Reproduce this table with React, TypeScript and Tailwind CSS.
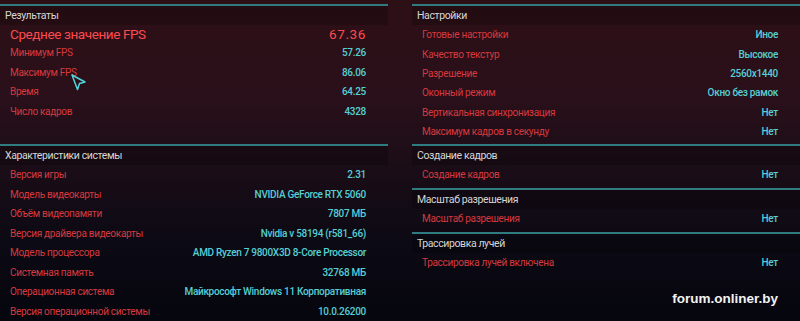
import React from "react";

type Row = [string, string];

const results: Row[] = [
  ["Минимум FPS", "57.26"],
  ["Максимум FPS", "86.06"],
  ["Время", "64.25"],
  ["Число кадров", "4328"],
];

const system: Row[] = [
  ["Версия игры", "2.31"],
  ["Модель видеокарты", "NVIDIA GeForce RTX 5060"],
  ["Объём видеопамяти", "7807 МБ"],
  ["Версия драйвера видеокарты", "Nvidia v 58194 (r581_66)"],
  ["Модель процессора", "AMD Ryzen 7 9800X3D 8-Core Processor"],
  ["Системная память", "32768 МБ"],
  ["Операционная система", "Майкрософт Windows 11 Корпоративная"],
  ["Версия операционной системы", "10.0.26200"],
];

const settings: Row[] = [
  ["Готовые настройки", "Иное"],
  ["Качество текстур", "Высокое"],
  ["Разрешение", "2560x1440"],
  ["Оконный режим", "Окно без рамок"],
  ["Вертикальная синхронизация", "Нет"],
  ["Максимум кадров в секунду", "Нет"],
];

function Header({ title }: { title: string }) {
  return (
    <div className="border-t-2 border-[#2f7b80]">
      <div className="h-[19px] flex items-center pl-[5px] bg-black/20 text-[10.5px] text-[#d6d6d6] tracking-[-0.4px]">
        {title}
      </div>
    </div>
  );
}

function Line({ label, value, h = "h-[19.5px]" }: { label: string; value: string; h?: string }) {
  return (
    <div className={`${h} flex items-center justify-between pl-[10px] pr-[22px] text-[10px] tracking-[-0.3px]`}>
      <span className="text-[#d8393e]">{label}</span>
      <span className="text-[#55cfd5] font-medium">{value}</span>
    </div>
  );
}

function Cursor() {
  return (
    <svg
      className="absolute left-[70px] top-[73px]"
      width="18"
      height="18"
      viewBox="0 0 18 18"
      fill="none"
    >
      <path
        d="M2 2 L15 9 L9.5 10.5 L7.5 16.5 Z"
        stroke="#4fd6dd"
        strokeWidth="1.5"
        strokeLinejoin="round"
      />
    </svg>
  );
}

export default function App() {
  return (
    <main
      className="relative w-[800px] h-[321px] overflow-hidden flex gap-[24px] pt-[4px] bg-[linear-gradient(180deg,#2d0f16_0%,#2a101a_30%,#1c0d17_50%,#0c0a14_75%,#06060e_100%)]"
      style={{ fontFamily: "Roboto, 'Noto Sans', sans-serif" }}
    >
      <Cursor />

      <section className="w-[388px] flex flex-col">
        <Header title="Результаты" />
        <div className="h-[18px] flex items-center justify-between pl-[10px] pr-[22px] text-[13.5px] tracking-[-0.4px] text-[#ff4a4e]">
          <span>Среднее значение FPS</span>
          <span className="tracking-[0.6px]">67.36</span>
        </div>
        {results.map(([l, v]) => (
          <Line key={l} label={l} value={v} />
        ))}
        <div className="h-[23px]" />
        <Header title="Характеристики системы" />
        {system.map(([l, v]) => (
          <Line key={l} label={l} value={v} />
        ))}
      </section>

      <section className="flex-1 flex flex-col">
        <Header title="Настройки" />
        {settings.map(([l, v]) => (
          <Line key={l} label={l} value={v} h="h-[19.4px]" />
        ))}
        <div className="h-[2.6px]" />

        <Header title="Создание кадров" />
        <Line label="Создание кадров" value="Нет" />
        <div className="h-[3.5px]" />

        <Header title="Масштаб разрешения" />
        <Line label="Масштаб разрешения" value="Нет" />
        <div className="h-[3.5px]" />

        <Header title="Трассировка лучей" />
        <Line label="Трассировка лучей включена" value="Нет" />

        <div className="flex justify-end pr-[22px] pt-[17px]">
          <span
            className="text-[13.5px] font-bold text-[#f2f2f2]"
            style={{ fontFamily: "'Liberation Sans', Arial, sans-serif" }}
          >
            forum.onliner.by
          </span>
        </div>
      </section>
    </main>
  );
}
